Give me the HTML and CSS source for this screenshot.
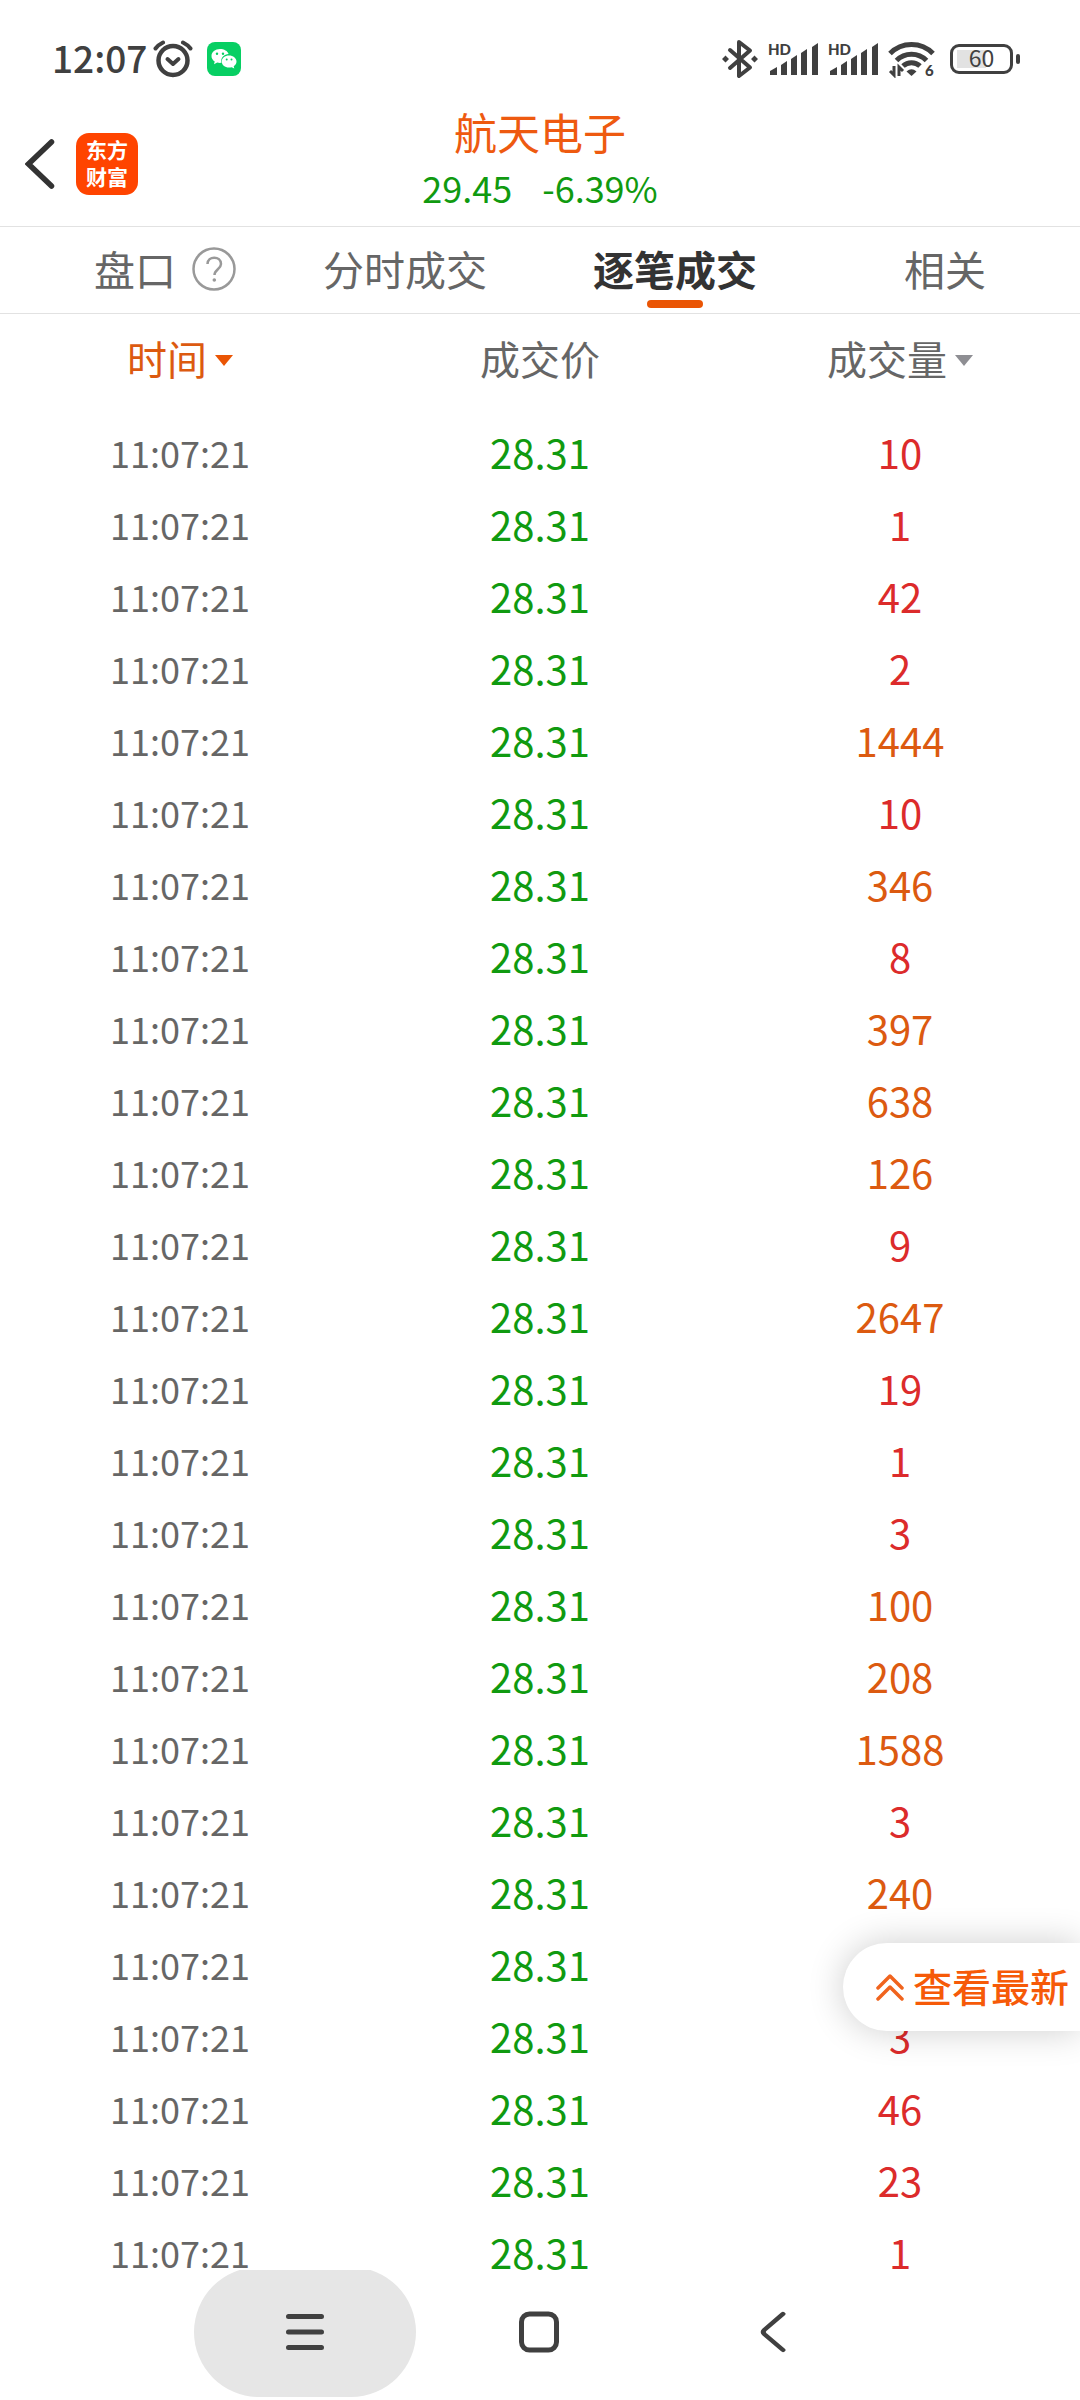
FILE: index.html
```html
<!DOCTYPE html>
<html lang="zh-CN">
<head>
<meta charset="utf-8">
<meta name="viewport" content="width=device-width, initial-scale=1">
<title>航天电子 - 逐笔成交</title>
<link rel="stylesheet" href="styles.css">
</head>
<body>
<div class="status">
  <div class="status-left">
    <span class="clock">12:07</span>
    <svg class="alarm" width="40" height="38" viewBox="0 0 40 38" fill="none" stroke="#404040" stroke-linecap="round">
      <circle cx="20" cy="20.500" r="14.500" stroke-width="4.500"/>
      <path d="M14.500 19l5.500 5 5.500-5" stroke-width="4" stroke-linejoin="round"/>
      <path d="M2.500 8.500Q5 5 10 2.500M37.500 8.500Q35 5 30 2.500" stroke-width="4"/>
    </svg>
    <svg class="wechat" width="34" height="34" viewBox="0 0 34 34">
      <rect width="34" height="34" rx="8" fill="#07cf63"/>
      <path d="M13 7c-4.800 0-8.500 3.100-8.500 7 0 2.300 1.200 4.200 3.200 5.500L7 22.200l3.200-1.700c1.300.4 2.800.5 4.200.3-1.200-5 3-8.800 7.200-8.800C20.700 9 17.100 7 13 7z" fill="#fff"/>
      <path d="M22 13.500c-4.200 0-7.300 2.700-7.300 6s3.100 6.100 7.300 6.100c.9 0 1.900-.1 2.700-.4l2.600 1.400-.6-2.300c1.700-1.200 2.800-2.900 2.800-4.800 0-3.300-3.300-6-7.500-6z" fill="#fff"/>
      <g fill="#07cf63"><circle cx="10" cy="11.700" r="1.200"/><circle cx="16" cy="11.700" r="1.200"/><circle cx="19.700" cy="17.500" r="1"/><circle cx="24.500" cy="17.500" r="1"/></g>
    </svg>
  </div>
  <div class="status-right">
    <svg width="36" height="40" viewBox="0 0 36 40">
      <path d="M8 11L28 28.500 17 37V3l11 8.500L8 29" fill="none" stroke="#404040" stroke-width="4" stroke-linejoin="round" stroke-linecap="round"/>
      <path d="M0 20l3.500-3.500L7 20l-3.500 3.500zM29 20l3.500-3.500L36 20l-3.500 3.500z" fill="#404040"/>
    </svg>
    <svg class="signal" width="50" height="38" viewBox="0 0 50 38" fill="#404040">
      <text x="0" y="15" class="tiny">HD</text>
      <path d="M2 35v-4l7-4v8zM13 35V25l6-4v14zM23 35V19l6-4v20zM33 35V13l6-4v26zM44 35V7l6-4v32z"/>
    </svg>
    <svg class="signal" width="50" height="38" viewBox="0 0 50 38" fill="#404040">
      <text x="0" y="15" class="tiny">HD</text>
      <path d="M2 35v-4l7-4v8zM13 35V25l6-4v14zM23 35V19l6-4v20zM33 35V13l6-4v26zM44 35V7l6-4v32z"/>
    </svg>
    <svg class="wifi" width="48" height="38" viewBox="0 0 48 38" fill="none" stroke="#404040">
      <path d="M2 13.500a30 30 0 0 1 43 0M8.500 20.500a21 21 0 0 1 30 0M15 26a12.500 12.500 0 0 1 17 0" stroke-width="5"/>
      <path d="M18.500 31.500Q23.500 27 28.500 31.500L23.500 36z" fill="#404040" stroke="none"/>
      <path d="M6 26v9l-4-4M11 36v-9l4 4" stroke-width="3"/>
      <text x="37" y="36" class="tiny" fill="#404040" stroke="none">6</text>
    </svg>
    <div class="battery"><span class="level">60</span></div>
  </div>
</div>

<header class="header">
  <div class="header-left">
    <button class="back" aria-label="返回">
      <svg width="30" height="50" viewBox="0 0 30 50"><path d="M26.500 3L3.500 25l23 22" fill="none" stroke="#333" stroke-width="5.500" stroke-linecap="round"/></svg>
    </button>
    <div class="logo"><span>东方</span><span>财富</span></div>
  </div>
  <div class="stock">
    <h1 class="name">航天电子</h1>
    <p class="quote"><span>29.45</span><span>-6.39%</span></p>
  </div>
</header>

<nav class="tabs">
  <a class="tab" href="#book"><span class="tab-label">盘口
    <svg class="help" width="44" height="44" viewBox="0 0 44 44" fill="none" stroke="#999">
      <circle cx="22" cy="22" r="20.500" stroke-width="2.500"/>
      <path d="M15.500 17c0-8.500 13.500-8.500 13.500 0 0 5-6.500 5.500-6.500 11" stroke-width="2.500"/>
      <circle cx="22.300" cy="33" r="1.800" fill="#999" stroke="none"/>
    </svg></span></a>
  <a class="tab" href="#minute">分时成交</a>
  <a class="tab active" href="#ticks" aria-current="page">逐笔成交</a>
  <a class="tab" href="#related">相关</a>
</nav>

<main class="content">
  <table class="ticks">
    <thead>
      <tr><th class="sorted">时间<svg class="caret" width="18" height="11" viewBox="0 0 18 11"><path d="M0 0h18L9 11z" fill="#ea5504"/></svg></th><th>成交价</th><th>成交量<svg class="caret" width="18" height="11" viewBox="0 0 18 11"><path d="M0 0h18L9 11z" fill="#8e8e93"/></svg></th></tr>
    </thead>
    <tbody>
      <tr><td class="time">11:07:21</td><td class="price">28.31</td><td class="vol">10</td></tr>
      <tr><td class="time">11:07:21</td><td class="price">28.31</td><td class="vol">1</td></tr>
      <tr><td class="time">11:07:21</td><td class="price">28.31</td><td class="vol">42</td></tr>
      <tr><td class="time">11:07:21</td><td class="price">28.31</td><td class="vol">2</td></tr>
      <tr><td class="time">11:07:21</td><td class="price">28.31</td><td class="vol big">1444</td></tr>
      <tr><td class="time">11:07:21</td><td class="price">28.31</td><td class="vol">10</td></tr>
      <tr><td class="time">11:07:21</td><td class="price">28.31</td><td class="vol big">346</td></tr>
      <tr><td class="time">11:07:21</td><td class="price">28.31</td><td class="vol">8</td></tr>
      <tr><td class="time">11:07:21</td><td class="price">28.31</td><td class="vol big">397</td></tr>
      <tr><td class="time">11:07:21</td><td class="price">28.31</td><td class="vol big">638</td></tr>
      <tr><td class="time">11:07:21</td><td class="price">28.31</td><td class="vol big">126</td></tr>
      <tr><td class="time">11:07:21</td><td class="price">28.31</td><td class="vol">9</td></tr>
      <tr><td class="time">11:07:21</td><td class="price">28.31</td><td class="vol big">2647</td></tr>
      <tr><td class="time">11:07:21</td><td class="price">28.31</td><td class="vol">19</td></tr>
      <tr><td class="time">11:07:21</td><td class="price">28.31</td><td class="vol">1</td></tr>
      <tr><td class="time">11:07:21</td><td class="price">28.31</td><td class="vol">3</td></tr>
      <tr><td class="time">11:07:21</td><td class="price">28.31</td><td class="vol big">100</td></tr>
      <tr><td class="time">11:07:21</td><td class="price">28.31</td><td class="vol big">208</td></tr>
      <tr><td class="time">11:07:21</td><td class="price">28.31</td><td class="vol big">1588</td></tr>
      <tr><td class="time">11:07:21</td><td class="price">28.31</td><td class="vol">3</td></tr>
      <tr><td class="time">11:07:21</td><td class="price">28.31</td><td class="vol big">240</td></tr>
      <tr><td class="time">11:07:21</td><td class="price">28.31</td><td class="vol"></td></tr>
      <tr><td class="time">11:07:21</td><td class="price">28.31</td><td class="vol">3</td></tr>
      <tr><td class="time">11:07:21</td><td class="price">28.31</td><td class="vol">46</td></tr>
      <tr><td class="time">11:07:21</td><td class="price">28.31</td><td class="vol">23</td></tr>
      <tr><td class="time">11:07:21</td><td class="price">28.31</td><td class="vol">1</td></tr>
    </tbody>
  </table>
  <button class="latest">
    <svg width="28" height="28" viewBox="0 0 28 28" fill="none" stroke="#f0641e" stroke-width="3.500" stroke-linecap="round" stroke-linejoin="round"><path d="M2 15L14 3l12 12M2 26l12-12 12 12"/></svg>
    <span>查看最新</span>
  </button>
</main>

<footer class="sysnav">
  <button class="key pressed" aria-label="最近任务"><svg width="38" height="38" viewBox="0 0 38 38" stroke="#404040" stroke-width="5" stroke-linecap="round"><path d="M2.500 3.500h33M2.500 19h33M2.500 34.500h33"/></svg></button>
  <button class="key" aria-label="主屏幕"><svg width="42" height="42" viewBox="0 0 42 42"><rect x="3.500" y="3" width="35" height="36" rx="8" fill="none" stroke="#404040" stroke-width="5"/></svg></button>
  <button class="key" aria-label="返回"><svg width="26" height="54" viewBox="0 0 26 54"><path d="M23 3.500L4.500 24q-2.500 3 0 6L23 50.500" fill="none" stroke="#404040" stroke-width="5" stroke-linecap="round" transform="translate(0 6.200) scale(1 .77)"/></svg></button>
</footer>
</body>
</html>
```

FILE: styles.css
```css
* {
  box-sizing: border-box;
}

body {
  margin: 0;
  height: 100vh;
  display: flex;
  flex-direction: column;
  overflow: hidden;
  background: #fff;
  color: #666;
  font-family: "Noto Sans CJK SC", "Noto Sans", sans-serif;
  font-size: 41px;
}

button {
  margin: 0;
  padding: 0;
  border: 0;
  background: none;
  font: inherit;
  color: inherit;
}

svg {
  display: block;
  flex: none;
}

/* System status bar */
.status {
  flex: none;
  display: flex;
  justify-content: space-between;
  align-items: center;
  height: 103px;
  padding: 14px 60px 0 52px;
  color: #404040;
}

.status-left,
.status-right {
  display: flex;
  align-items: center;
}

.clock {
  margin-right: 6px;
  padding-bottom: 4px;
  font-size: 37px;
  font-weight: 500;
  line-height: 56px;
}

.wechat {
  margin-left: 14px;
}

.status-right {
  gap: 10px;
}

.tiny {
  font-family: Lato, sans-serif;
  font-size: 15px;
  font-weight: 900;
}

.battery {
  position: relative;
  display: flex;
  align-items: center;
  justify-content: center;
  width: 63px;
  height: 30px;
  margin: 0 7px 0 4px;
  border: 3px solid #404040;
  border-radius: 9px;
  background: linear-gradient(#e2e2e2, #e2e2e2) 4px center / 29px 18px no-repeat;
}

.battery::after {
  content: "";
  position: absolute;
  right: -10px;
  width: 4px;
  height: 10px;
  border-radius: 2px;
  background: #404040;
}

.level {
  padding-bottom: 3px;
  font-size: 23px;
  line-height: 24px;
}

/* Stock header */
.header {
  flex: none;
  display: grid;
  grid-template-columns: 1fr auto 1fr;
  align-items: center;
  border-bottom: 1px solid #e2e2e2;
}

.header-left {
  display: flex;
  align-items: center;
  gap: 21px;
  padding: 0 0 2px 25px;
}

.logo {
  display: flex;
  flex-direction: column;
  align-items: center;
  justify-content: center;
  width: 62px;
  height: 62px;
  padding-bottom: 2px;
  border-radius: 13px;
  background: #ff4400;
  color: #fff;
  font-size: 21px;
  font-weight: 700;
  line-height: 27px;
}

.stock {
  padding-bottom: 11px;
  text-align: center;
  line-height: 56px;
}

.name {
  margin: 0;
  color: #ee5a10;
  font-size: 43px;
  font-weight: 400;
}

.quote {
  display: flex;
  justify-content: center;
  gap: 30px;
  margin: 0;
  color: #109a10;
  font-size: 36px;
}

/* Section tabs */
.tabs {
  flex: none;
  display: grid;
  grid-template-columns: repeat(4, 1fr);
  border-bottom: 1px solid #e2e2e2;
}

.tab {
  position: relative;
  height: 86px;
  color: #666;
  line-height: 82px;
  text-align: center;
  text-decoration: none;
}

.tab-label {
  position: relative;
}

.help {
  position: absolute;
  top: 9px;
  left: 100%;
  margin-left: 16px;
}

.active {
  color: #333;
  font-weight: 700;
}

.active::after {
  content: "";
  position: absolute;
  bottom: 5px;
  left: 50%;
  width: 56px;
  height: 8px;
  margin-left: -28px;
  border-radius: 4px;
  background: #ea5504;
}

/* Trade list */
.content {
  position: relative;
  flex: 1;
  min-height: 0;
  overflow: hidden;
}

.ticks {
  width: 100%;
  table-layout: fixed;
  border-collapse: collapse;
  text-align: center;
}

.ticks th {
  padding: 0 0 14px;
  font-size: 40px;
  font-weight: 400;
  line-height: 88px;
}

.ticks td {
  height: 72px;
  padding: 0;
  font-size: 40px;
  line-height: 40px;
}

.ticks .sorted {
  color: #dc5a10;
}

.caret {
  display: inline-block;
  margin-left: 8px;
  vertical-align: 9px;
}

.ticks .time {
  font-size: 36px;
}

.price {
  color: #109a10;
}

.vol {
  color: #dc2b2b;
}

.big {
  color: #dc5a10;
}

.latest {
  position: absolute;
  right: 0;
  bottom: 239px;
  display: flex;
  align-items: center;
  gap: 9px;
  height: 88px;
  padding: 0 11px 0 33px;
  border-radius: 44px 0 0 44px;
  background: #fff;
  box-shadow: 0 0 36px rgba(0, 0, 0, 0.2);
  color: #f65a08;
  font-size: 39px;
  font-weight: 500;
  line-height: 84px;
}

.latest span {
  padding-bottom: 4px;
}

/* System navigation keys */
.sysnav {
  flex: none;
  display: flex;
  justify-content: center;
  gap: 12px;
  height: 130px;
  padding-right: 2px;
  overflow: hidden;
}

.key {
  display: flex;
  align-items: center;
  justify-content: center;
  width: 222px;
  height: 130px;
  margin-top: -3px;
  border-radius: 65px;
}

.pressed {
  background: #e6e6e6;
}
```
